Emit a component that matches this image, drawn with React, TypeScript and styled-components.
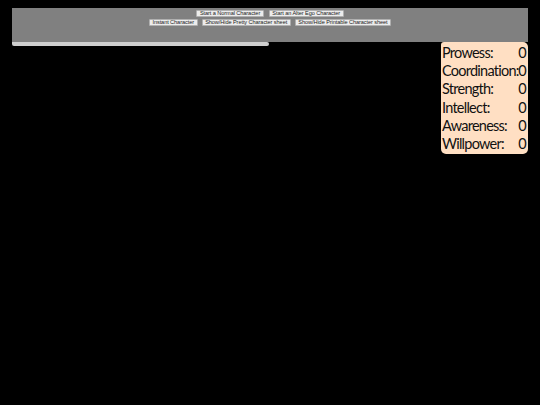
import React from "react";
import styled, { createGlobalStyle } from "styled-components";

const Global = createGlobalStyle`
  html, body { margin: 0; padding: 0; background: #000; }
  body { width: 540px; height: 405px; overflow: hidden; }
`;

const Page = styled.div`
  padding: 8px 12px 0 12px;
  display: flex;
  flex-direction: column;
`;

const Toolbar = styled.div`
  background: #808080;
  height: 34px;
  display: flex;
  flex-direction: column;
  align-items: center;
  padding-top: 1.5px;
  gap: 2px;
  box-sizing: border-box;
`;

const ButtonRow = styled.div<{ $gap: number }>`
  display: flex;
  gap: ${(p) => p.$gap}px;
  justify-content: center;
`;

const Btn = styled.button`
  font-family: "Liberation Sans", Arial, sans-serif;
  font-size: 5.6px;
  letter-spacing: -0.08px;
  line-height: 5px;
  height: 7px;
  padding: 0 2.6px;
  margin: 0;
  background: #ececec;
  color: #222;
  border: 0.5px solid #b0b0b0;
  border-radius: 1px;
  white-space: nowrap;
`;

const Lower = styled.div`
  display: flex;
  align-items: flex-start;
  justify-content: space-between;
`;

const Track = styled.div`
  width: 257px;
  height: 4px;
  background: #cfcfcf;
  border-radius: 0 2px 2px 2px;
`;

const Stats = styled.div`
  width: 87px;
  height: 112px;
  box-sizing: border-box;
  background: #ffdfc3;
  border-radius: 3px 5px 5px 5px;
  padding: 1.5px 1px 0 1px;
  display: grid;
  grid-template-columns: minmax(0, 1fr) auto;
  grid-auto-rows: 18.4px;
  align-items: center;
  font-family: "Comic Sans MS", Lato, sans-serif;
  font-size: 14.5px;
  letter-spacing: -0.75px;
  color: #111;
`;

const Label = styled.span`
  line-height: 18.4px;
  white-space: nowrap;
`;

const Value = styled.span`
  line-height: 18.4px;
  text-align: right;
  padding-right: 1px;
`;

const stats = [
  "Prowess:",
  "Coordination:",
  "Strength:",
  "Intellect:",
  "Awareness:",
  "Willpower:",
];

export default function App() {
  return (
    <>
      <Global />
      <Page>
        <Toolbar>
          <ButtonRow $gap={5}>
            <Btn>Start a Normal Character</Btn>
            <Btn>Start an Alter Ego Character</Btn>
          </ButtonRow>
          <ButtonRow $gap={4}>
            <Btn>Instant Character</Btn>
            <Btn>Show/Hide Pretty Character sheet</Btn>
            <Btn>Show/Hide Printable Character sheet</Btn>
          </ButtonRow>
        </Toolbar>
        <Lower>
          <Track />
          <Stats>
            {stats.map((s) => (
              <React.Fragment key={s}>
                <Label>{s}</Label>
                <Value>0</Value>
              </React.Fragment>
            ))}
          </Stats>
        </Lower>
      </Page>
    </>
  );
}
